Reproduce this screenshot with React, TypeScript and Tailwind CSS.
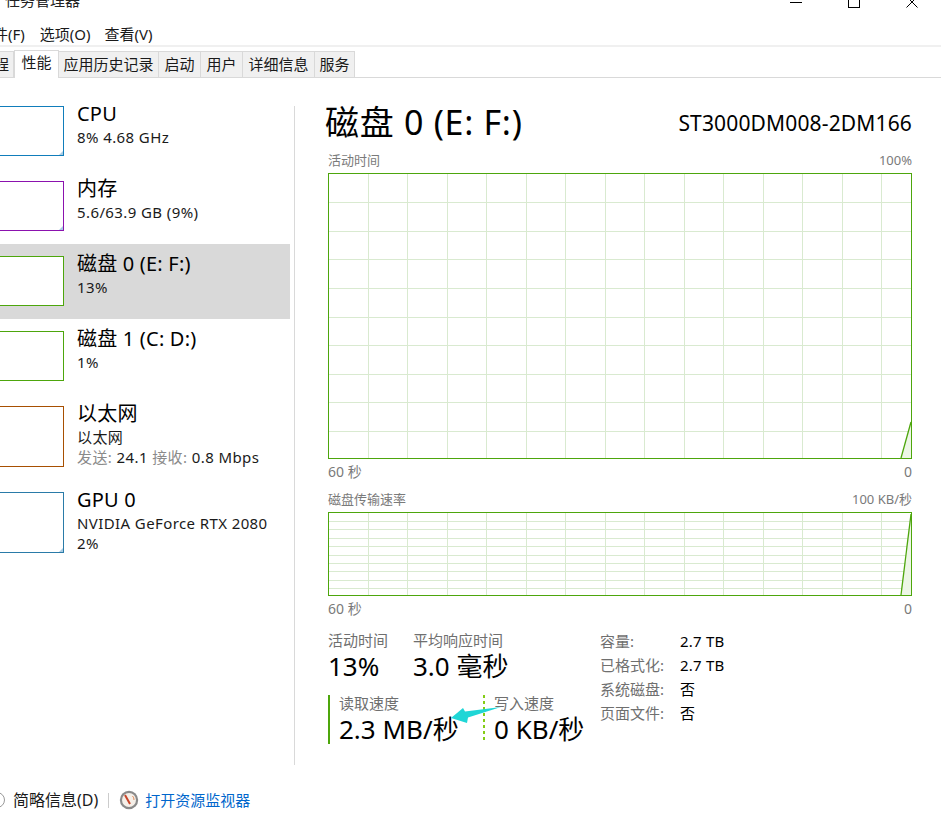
const FONT = "font-['Noto_Sans','Noto_Sans_CJK_SC',sans-serif]";

const TABS = [
  { label: '程', w: 'w-[14px] !justify-end pr-[4px]' },
  { label: '性能', w: 'w-[45px]', active: true },
  { label: '应用历史记录', w: 'w-[100px]' },
  { label: '启动', w: 'w-[42px]' },
  { label: '用户', w: 'w-[42px]' },
  { label: '详细信息', w: 'w-[72px]' },
  { label: '服务', w: 'w-[40px]' },
];

function Thumb({ border, tall, mark }: { border: string; tall?: boolean; mark?: boolean }) {
  return (
    <div className={`relative -ml-px w-[65px] shrink-0 border bg-white ${border} ${tall ? 'h-[61px]' : 'h-[50px]'}`}>
      {mark && (
        <svg className="absolute right-0 bottom-0" width="4" height="4" viewBox="0 0 4 4">
          <path d="M0 4 L4 0 L4 4 Z" fill="#a8cce4" />
        </svg>
      )}
    </div>
  );
}

function SideItem({
  title,
  lines,
  border,
  active,
  tall,
  mark,
}: {
  title: string;
  lines: React.ReactNode[];
  border: string;
  active?: boolean;
  tall?: boolean;
  mark?: boolean;
}) {
  return (
    <div className={`flex gap-[13px] pt-[12px] ${tall ? 'h-[86px]' : 'h-[75px]'} ${active ? 'bg-[#d9d9d9]' : ''}`}>
      <Thumb border={border} tall={tall} mark={mark} />
      <div className="-mt-[5px]">
        <div className="h-[26px] text-[20px] leading-[26px] tracking-[0.2px] text-black whitespace-nowrap">{title}</div>
        {lines.map((line, i) => (
          <div key={i} className="h-[20px] text-[15px] leading-[20px] tracking-[0.4px] text-[#1a1a1a] whitespace-nowrap">
            {line}
          </div>
        ))}
      </div>
    </div>
  );
}

function Chart({ height, rows }: { height: number; rows: number }) {
  const w = 582;
  const h = height - 2;
  const cols = Array.from({ length: 14 }, (_, i) => Math.round(39 + i * 39.46) + 0.5);
  const rowLines = Array.from({ length: rows - 1 }, (_, i) => Math.floor(((i + 1) * height) / rows) + 0.5);
  const peakY = height > 100 ? 248 : 1;
  return (
    <div className="border border-[#4da60c] bg-white">
      <svg className="block" width={w} height={h} viewBox={`0 0 ${w} ${h}`}>
        {cols.map((x) => (
          <line key={x} x1={x} x2={x} y1={0} y2={h} stroke="#d9ead0" strokeWidth="1" />
        ))}
        {rowLines.map((y) => (
          <line key={y} x1={0} x2={w} y1={y} y2={y} stroke="#d9ead0" strokeWidth="1" />
        ))}
        <path d={`M572 ${h} L${w} ${peakY} L${w} ${h} Z`} fill="#edf6e6" />
        <path d={`M572 ${h} L${w} ${peakY}`} fill="none" stroke="#4da60c" strokeWidth="1.3" />
      </svg>
    </div>
  );
}

function CaptionRow({ left, right, className }: { left: string; right: string; className: string }) {
  return (
    <div className={`flex justify-between text-[#7a7a7a] ${className}`}>
      <span>{left}</span>
      <span>{right}</span>
    </div>
  );
}

function Stat({ label, value, className }: { label: string; value: string; className?: string }) {
  return (
    <div className={className}>
      <div className="h-[18px] text-[15px] leading-[18px] text-[#6f6f6f] whitespace-nowrap">{label}</div>
      <div className="h-[34px] text-[26px] leading-[34px] text-black whitespace-nowrap">{value}</div>
    </div>
  );
}

function InfoRow({ label, value }: { label: string; value: string }) {
  return (
    <div className="flex h-[24px] items-center">
      <span className="w-[80px] text-[15px] text-[#6f6f6f]">{label}</span>
      <span className="text-[15px] tracking-[0.2px] text-black">{value}</span>
    </div>
  );
}

export default function App() {
  return (
    <div className={`relative flex h-[826px] w-[941px] flex-col overflow-hidden bg-white ${FONT}`}>
      {/* Title bar, cut off by the top of the capture */}
      <div className="flex h-[24px] shrink-0 justify-between overflow-hidden pl-[5px]">
        <div className="-mt-[10px] text-[15px] leading-[20px] text-[#222]">任务管理器</div>
        <div className="flex gap-[46px] pr-[23px]">
          <svg className="-mt-[4px]" width="12" height="12" viewBox="0 0 12 12">
            <path d="M0 6.5 H12" stroke="#000" />
          </svg>
          <svg className="-mt-[4px]" width="12" height="12" viewBox="0 0 12 12">
            <rect x="0.5" y="0.5" width="11" height="11" fill="none" stroke="#000" />
          </svg>
          <svg className="-mt-[4px]" width="12" height="12" viewBox="0 0 12 12">
            <path d="M0.5 0.5 L11.5 11.5 M11.5 0.5 L0.5 11.5" stroke="#000" />
          </svg>
        </div>
      </div>

      {/* Menu */}
      <div className="flex h-[21px] shrink-0 items-center gap-[14px] text-[15px] text-[#1a1a1a]">
        <span className="-ml-[7px] mr-px whitespace-nowrap">件(F)</span>
        <span>选项(O)</span>
        <span>查看(V)</span>
      </div>
      <div className="h-[2px] shrink-0 bg-[#f0f0f0]" />

      {/* Tabs */}
      <div className="flex h-[31px] shrink-0 items-end border-b border-[#d9d9d9]">
        {TABS.map((t) => (
          <div
            key={t.label}
            className={`flex items-center justify-center border-r border-[#d9d9d9] text-[15px] whitespace-nowrap text-[#1a1a1a] ${t.w} ${
              t.active ? '-mb-px h-[28px] border-x border-t bg-white pb-[4px]' : 'h-[26px] border-t bg-[#f0f0f0]'
            }`}
          >
            {t.label}
          </div>
        ))}
      </div>

      <div className="flex min-h-0 flex-1">
        {/* Sidebar */}
        <div className="w-[290px] shrink-0 pt-[16px]">
          <SideItem title="CPU" lines={['8% 4.68 GHz']} border="border-[#117dbb]" mark />
          <SideItem title="内存" lines={['5.6/63.9 GB (9%)']} border="border-[#8b12ae]" mark />
          <SideItem title="磁盘 0 (E: F:)" lines={['13%']} border="border-[#4da60c]" active />
          <SideItem title="磁盘 1 (C: D:)" lines={['1%']} border="border-[#4da60c]" />
          <SideItem
            title="以太网"
            lines={[
              '以太网',
              <>
                <span className="text-[#8a8a8a]">发送:</span> 24.1 <span className="text-[#8a8a8a]">接收:</span> 0.8 Mbps
              </>,
            ]}
            border="border-[#a74f01]"
            tall
          />
          <SideItem title="GPU 0" lines={['NVIDIA GeForce RTX 2080', '2%']} border="border-[#2a7ba8]" tall mark />
        </div>
        <div className="mt-[28px] ml-[4px] w-px shrink-0 bg-[#d9d9d9]" />

        {/* Disk detail */}
        <div className="ml-[33px] w-[584px] shrink-0">
          <div className="mt-[22px] flex h-[44px] items-center justify-between">
            <div className="-ml-[3px] text-[34px] leading-[44px] tracking-[0.7px] text-black whitespace-nowrap">磁盘 0 (E: F:)</div>
            <div className="mt-[4px] text-[21px] tracking-[0.15px] text-black whitespace-nowrap">ST3000DM008-2DM166</div>
          </div>
          <CaptionRow left="活动时间" right="100%" className="mt-[7px] h-[18px] text-[13px] leading-[18px]" />
          <div className="mt-[4px]">
            <Chart height={286} rows={10} />
          </div>
          <CaptionRow left="60 秒" right="0" className="mt-[4px] h-[18px] text-[14px] leading-[18px]" />
          <CaptionRow left="磁盘传输速率" right="100 KB/秒" className="mt-[9px] h-[18px] text-[13px] leading-[18px]" />
          <div className="mt-[4px]">
            <Chart height={84} rows={10} />
          </div>
          <CaptionRow left="60 秒" right="0" className="mt-[4px] h-[18px] text-[14px] leading-[18px]" />

          <div className="relative mt-[13px] flex">
            <div className="w-[272px] shrink-0">
              <div className="flex">
                <Stat label="活动时间" value="13%" className="w-[85px]" />
                <Stat label="平均响应时间" value="3.0 毫秒" />
              </div>
              <div className="mt-[12px] flex h-[49px]">
                <div className="w-[155px] border-l-2 border-[#4da60c] pl-[9px]">
                  <Stat label="读取速度" value="2.3 MB/秒" className="-mt-px" />
                </div>
                <div className="h-[46px] w-[2px] shrink-0 bg-[repeating-linear-gradient(to_bottom,#84cc16_0,#84cc16_3px,transparent_3px,transparent_6px)]" />
                <Stat label="写入速度" value="0 KB/秒" className="-mt-px ml-[9px]" />
              </div>
            </div>
            <div className="-mt-[2px]">
              <InfoRow label="容量:" value="2.7 TB" />
              <InfoRow label="已格式化:" value="2.7 TB" />
              <InfoRow label="系统磁盘:" value="否" />
              <InfoRow label="页面文件:" value="否" />
            </div>
            {/* Arrow drawn over the screenshot */}
            <svg className="absolute top-[70px] left-[118px]" width="60" height="30" viewBox="0 0 60 30">
              <path d="M5 17 L17 7 L19 10.5 L55 6 L22 16.5 L21 22 Z" fill="#1fd6d6" />
            </svg>
          </div>
        </div>
      </div>

      {/* Footer */}
      <div className="flex h-[61px] shrink-0 items-start pt-[25px] leading-[20px]">
        <div className="mt-[2px] -ml-[11px] h-[16px] w-[16px] shrink-0 rounded-full border border-[#999]" />
        <span className="ml-[8px] text-[16px] text-[#1a1a1a]">简略信息(D)</span>
        <div className="mt-[3px] ml-[10px] h-[15px] w-px bg-[#ccc]" />
        <svg className="ml-[10px] shrink-0" width="20" height="20" viewBox="0 0 20 20">
          <circle cx="10" cy="10" r="9.2" fill="#8a8a8a" />
          <circle cx="10" cy="10" r="7" fill="#f5efe8" />
          <path d="M6 5 L11 14" stroke="#c8452a" strokeWidth="2" />
          <path d="M13.5 6 A5 5 0 0 1 15 10" stroke="#e08a5a" fill="none" />
        </svg>
        <span className="ml-[6px] text-[15px] text-[#0066cc]">打开资源监视器</span>
      </div>
    </div>
  );
}
